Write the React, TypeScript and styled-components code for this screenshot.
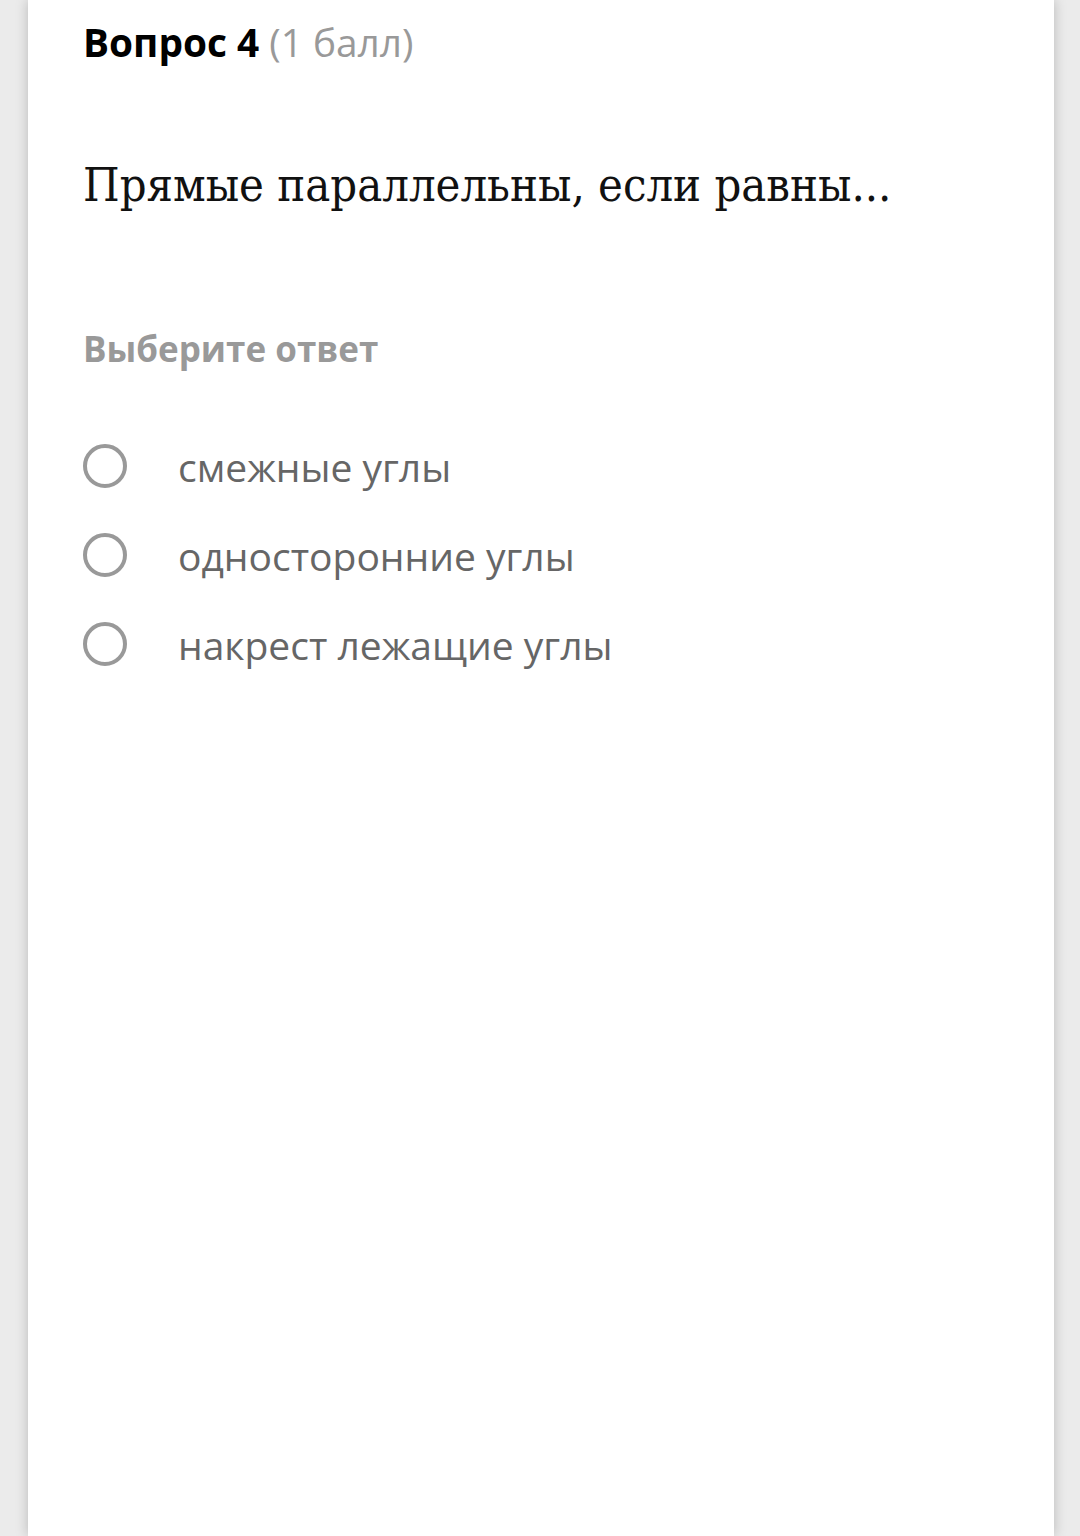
import React from 'react'
import styled, { createGlobalStyle } from 'styled-components'

const GlobalStyle = createGlobalStyle`
html, body {
  margin: 0;
  padding: 0;
  background: #ebebeb;
}
`

const options = ['смежные углы', 'односторонние углы', 'накрест лежащие углы']

const App = () => {
  return (
    <div>
      <GlobalStyle />
      <Page>
        <Card>
          <Header>
            <Number>Вопрос 4</Number> <Points>(1 балл)</Points>
          </Header>
          <Question>Прямые параллельны, если равны...</Question>
          <Hint>Выберите ответ</Hint>
          <Options>
            {options.map((o) => (
              <Option key={o}>
                <Radio />
                <Label>{o}</Label>
              </Option>
            ))}
          </Options>
        </Card>
      </Page>
    </div>
  )
}

export default App

const Page = styled.div`
width: 100%;
height: 1536px;
display: flex;
padding-left: 28px;
box-sizing: border-box;
`
const Card = styled.div`
width: 1026px;
height: 100%;
background-color: white;
box-shadow: 0 0 12px rgba(0,0,0,0.22);
padding: 16px 55px 0;
box-sizing: border-box;
`
const Header = styled.div`
font-family: "Open Sans", sans-serif;
font-size: 38.8px;
line-height: 52px;
`
const Number = styled.span`
font-weight: 700;
color: #000;
`
const Points = styled.span`
color: #999;
`
const Question = styled.div`
margin-top: 88px;
font-family: "DejaVu Serif", serif;
font-stretch: condensed;
font-size: 46.7px;
line-height: 58px;
color: #111;
`
const Hint = styled.div`
margin-top: 111px;
font-family: "Open Sans", sans-serif;
font-weight: 700;
font-size: 35px;
line-height: 48px;
color: #999;
`
const Options = styled.div`
margin-top: 67px;
display: flex;
flex-direction: column;
gap: 37px;
`
const Option = styled.div`
display: flex;
align-items: center;
height: 52px;
`
const Radio = styled.span`
width: 36px;
height: 36px;
border: 4px solid #999;
border-radius: 50%;
flex-shrink: 0;
`
const Label = styled.span`
margin-left: 51px;
font-family: "Open Sans", sans-serif;
font-size: 39px;
color: #666;
`
